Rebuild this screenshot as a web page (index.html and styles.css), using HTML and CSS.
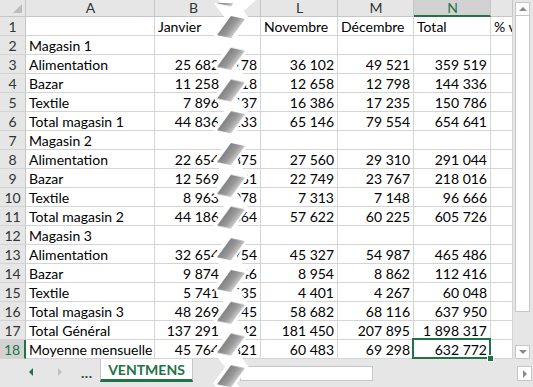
FILE: index.html
```html
<!DOCTYPE html>
<html lang="fr">
<head>
    <meta charset="UTF-8">
    <title>VENTMENS</title>
    <link rel="stylesheet" href="styles.css">
</head>
<body>
<div class="app">
    <div class="main">
        <div class="sheet">
            <!-- en-têtes de colonnes -->
            <div class="corner"><span class="tri"></span></div>
            <div class="ch">A</div>
            <div class="ch">B</div>
            <div class="ch"></div>
            <div class="ch">L</div>
            <div class="ch">M</div>
            <div class="ch on">N</div>
            <div class="ch"></div>

            <div class="rh">1</div><div></div><div>Janvier</div><div></div><div>Novembre</div><div>Décembre</div><div>Total</div><div>% ventes</div>
            <div class="rh">2</div><div>Magasin 1</div><div></div><div></div><div></div><div></div><div></div><div></div>
            <div class="rh">3</div><div>Alimentation</div><div class="n b">25 682</div><div class="n">30 178</div><div class="n">36 102</div><div class="n">49 521</div><div class="n">359 519</div><div></div>
            <div class="rh">4</div><div>Bazar</div><div class="n b">11 258</div><div class="n">13 518</div><div class="n">12 658</div><div class="n">12 798</div><div class="n">144 336</div><div></div>
            <div class="rh">5</div><div>Textile</div><div class="n b">7 896</div><div class="n">12 437</div><div class="n">16 386</div><div class="n">17 235</div><div class="n">150 786</div><div></div>
            <div class="rh">6</div><div>Total magasin 1</div><div class="n b">44 836</div><div class="n">56 133</div><div class="n">65 146</div><div class="n">79 554</div><div class="n">654 641</div><div></div>
            <div class="rh">7</div><div>Magasin 2</div><div></div><div></div><div></div><div></div><div></div><div></div>
            <div class="rh">8</div><div>Alimentation</div><div class="n b">22 654</div><div class="n">24 875</div><div class="n">27 560</div><div class="n">29 310</div><div class="n">291 044</div><div></div>
            <div class="rh">9</div><div>Bazar</div><div class="n b">12 569</div><div class="n">18 731</div><div class="n">22 749</div><div class="n">23 767</div><div class="n">218 016</div><div></div>
            <div class="rh">10</div><div>Textile</div><div class="n b">8 963</div><div class="n">8 078</div><div class="n">7 313</div><div class="n">7 148</div><div class="n">96 666</div><div></div>
            <div class="rh">11</div><div>Total magasin 2</div><div class="n b">44 186</div><div class="n">51 664</div><div class="n">57 622</div><div class="n">60 225</div><div class="n">605 726</div><div></div>
            <div class="rh">12</div><div>Magasin 3</div><div></div><div></div><div></div><div></div><div></div><div></div>
            <div class="rh">13</div><div>Alimentation</div><div class="n b">32 654</div><div class="n">38 754</div><div class="n">45 327</div><div class="n">54 987</div><div class="n">465 486</div><div></div>
            <div class="rh">14</div><div>Bazar</div><div class="n b">9 874</div><div class="n">9 046</div><div class="n">8 954</div><div class="n">8 862</div><div class="n">112 416</div><div></div>
            <div class="rh">15</div><div>Textile</div><div class="n b">5 741</div><div class="n">5 635</div><div class="n">4 401</div><div class="n">4 267</div><div class="n">60 048</div><div></div>
            <div class="rh">16</div><div>Total magasin 3</div><div class="n b">48 269</div><div class="n">53 845</div><div class="n">58 682</div><div class="n">68 116</div><div class="n">637 950</div><div></div>
            <div class="rh">17</div><div>Total Général</div><div class="n b">137 291</div><div class="n">161 642</div><div class="n">181 450</div><div class="n">207 895</div><div class="n">1 898 317</div><div></div>
            <div class="rh on">18</div><div>Moyenne mensuelle</div><div class="n b">45 764</div><div class="n">53 821</div><div class="n">60 483</div><div class="n">69 298</div><div class="n sel">632 772</div><div></div>
        </div>

        <div class="vscroll">
            <div class="vbtn"><span class="up"></span></div>
            <div class="vthumb"></div>
            <div class="vbtn"><span class="down"></span></div>
        </div>
    </div>

    <div class="bottom">
        <div class="tabnav">
            <span class="nav-l"></span>
            <span class="nav-r"></span>
            <span class="dots">...</span>
        </div>
        <div class="tab">VENTMENS</div>
        <div class="addsheet">
            <svg width="16" height="16" viewBox="0 0 16 16">
                <circle cx="8" cy="8" r="6.5" fill="none" stroke="#8a8a8a" stroke-width="1.3"/>
                <path d="M8 4.5v7M4.5 8h7" stroke="#8a8a8a" stroke-width="1.3"/>
            </svg>
        </div>
        <div class="hscroll">
            <div class="hthumb"></div>
            <div class="hbtn"><span class="right"></span></div>
        </div>
    </div>

    <!-- coupure entre les colonnes B et L -->
    <svg class="tear" width="533" height="387" viewBox="0 0 533 387">
        <defs>
            <linearGradient id="shade" gradientUnits="userSpaceOnUse" x1="223" y1="2" x2="239" y2="15">
                <stop offset="0" stop-color="#727272"/>
                <stop offset="0.55" stop-color="#9a9a9a"/>
                <stop offset="1" stop-color="#e4e4e4"/>
            </linearGradient>
            <g id="seg">
                <polygon points="231,-2 245,1 231,20 217,17" fill="url(#shade)"/>
            </g>
            <pattern id="zz" patternUnits="userSpaceOnUse" x="0" y="18" width="533" height="31.75">
                <polyline points="225,-15.9 237,0 225,15.9 237,31.75 225,47.6" fill="none" stroke="#fff" stroke-width="19"/>
                <use href="#seg"/>
                <use href="#seg" transform="translate(0,31.75)"/>
            </pattern>
        </defs>
        <polygon points="218,0 256,0 237,17" fill="#fff"/>
        <rect x="200" y="3" width="70" height="384" fill="url(#zz)"/>
    </svg>
</div>
</body>
</html>
```

FILE: styles.css
```css
body {
    margin: 0;
    font-family: Lato, "Liberation Sans", sans-serif;
}

.app {
    position: relative;
    width: 533px;
    height: 387px;
    overflow: hidden;
    background: #e6e6e6;
}

.main {
    display: flex;
    height: 359px;
}

/* grille */
.sheet {
    display: grid;
    grid-template-columns: 26px 129px 77px 29px 77px 76px 77px 22px;
    grid-template-rows: 17px repeat(18, 19px);
    background: #fff;
    font-size: 14px;
    color: #000;
}

.sheet > div {
    box-sizing: border-box;
    border-right: 1px solid #d4d4d4;
    border-bottom: 1px solid #d4d4d4;
    padding: 0 2px 0 3px;
    line-height: 19px;
    white-space: nowrap;
    overflow: hidden;
}

/* nombres alignés à droite, débordent vers la gauche */
.sheet > .n {
    display: flex;
    justify-content: flex-end;
    padding-right: 3px;
}

.sheet > .b {
    padding-right: 12px;
}

.sheet > .ch,
.sheet > .corner {
    background: #e6e6e6;
    border-color: #c6c6c6;
    text-align: center;
    line-height: 16px;
    color: #333;
}

.sheet > .rh {
    background: #e6e6e6;
    border-right-color: #c6c6c6;
    text-align: center;
    padding: 0;
    color: #333;
}

.sheet > .ch.on {
    background: #d2d2d2;
    color: #217346;
    border-bottom: 2px solid #217346;
}

.sheet > .rh.on {
    background: #d2d2d2;
    color: #217346;
    border-right: 2px solid #217346;
}

.sheet > .corner {
    position: relative;
}

.tri {
    position: absolute;
    right: 3px;
    bottom: 3px;
    width: 0;
    height: 0;
    border-left: 9px solid transparent;
    border-bottom: 9px solid #bdbdbd;
}

.sheet > .sel {
    position: relative;
    overflow: visible;
}

.sel::before {
    content: '';
    position: absolute;
    left: -2px;
    top: -2px;
    right: -1px;
    bottom: -1px;
    border: 2px solid #217346;
}

.sel::after {
    content: '';
    position: absolute;
    right: -4px;
    bottom: -4px;
    width: 5px;
    height: 5px;
    background: #217346;
    border: 1px solid #fff;
}

/* ascenseur vertical */
.vscroll {
    display: flex;
    flex-direction: column;
    width: 20px;
    padding: 2px 3px 0 2px;
    box-sizing: border-box;
}

.vbtn {
    height: 14px;
    background: #fff;
    border: 1px solid #c6c6c6;
    box-sizing: border-box;
    display: flex;
    align-items: center;
    justify-content: center;
}

.vthumb {
    height: 296px;
    background: #fff;
    border: 1px solid #c6c6c6;
    border-top: none;
    box-sizing: border-box;
    margin-bottom: auto;
}

.up {
    border-left: 4px solid transparent;
    border-right: 4px solid transparent;
    border-bottom: 4px solid #8a8a8a;
}

.down {
    border-left: 4px solid transparent;
    border-right: 4px solid transparent;
    border-top: 4px solid #8a8a8a;
}

/* barre des onglets */
.bottom {
    display: flex;
    height: 28px;
}

.tabnav {
    display: flex;
    align-items: center;
    width: 100px;
    height: 26px;
    padding-left: 29px;
    box-sizing: border-box;
}

.nav-l {
    border-top: 4px solid transparent;
    border-bottom: 4px solid transparent;
    border-right: 4px solid #217346;
    margin-right: 25px;
}

.nav-r {
    border-top: 4px solid transparent;
    border-bottom: 4px solid transparent;
    border-left: 4px solid #c0c0c0;
    margin-right: 19px;
}

.dots {
    font-weight: bold;
    font-size: 14px;
    color: #1f4e35;
    letter-spacing: 0.5px;
}

.tab {
    width: 93px;
    height: 23px;
    box-sizing: border-box;
    background: #fff;
    border-left: 1px solid #c6c6c6;
    border-right: 1px solid #c6c6c6;
    border-bottom: 3px solid #217346;
    color: #217346;
    font-weight: bold;
    font-size: 14px;
    text-align: center;
    line-height: 22px;
}

.addsheet {
    width: 47px;
    display: flex;
    justify-content: flex-end;
    padding-top: 6px;
    height: 16px;
}

.hscroll {
    flex: 1;
    display: flex;
    align-items: flex-start;
    padding-top: 7px;
}

.hthumb {
    width: 133px;
    height: 15px;
    background: #fff;
    border: 1px solid #c6c6c6;
    box-sizing: border-box;
}

.hbtn {
    width: 15px;
    height: 15px;
    margin-left: auto;
    margin-right: 1px;
    background: #fff;
    border: 1px solid #c6c6c6;
    box-sizing: border-box;
    display: flex;
    align-items: center;
    justify-content: center;
}

.right {
    border-top: 4px solid transparent;
    border-bottom: 4px solid transparent;
    border-left: 4px solid #8a8a8a;
}

.tear {
    position: absolute;
    left: 0;
    top: 0;
    pointer-events: none;
}
```
